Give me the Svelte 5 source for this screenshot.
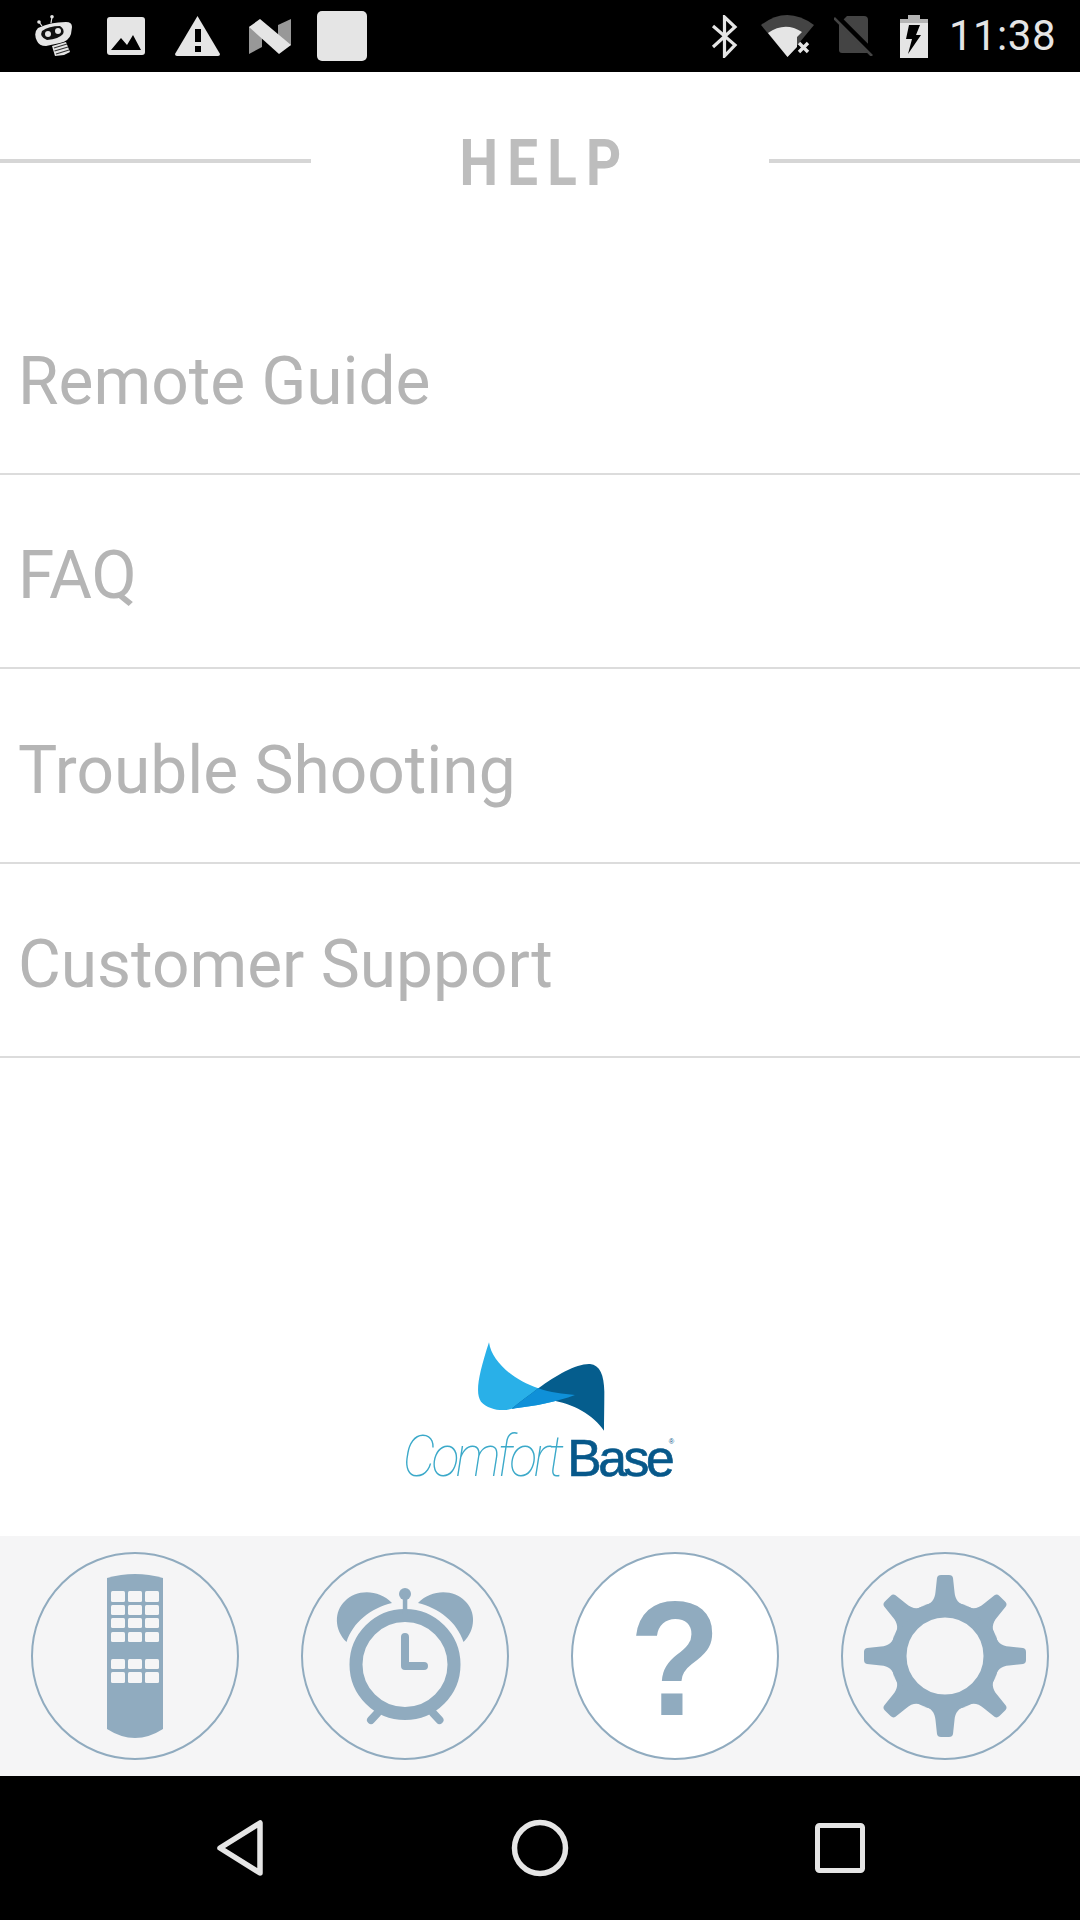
<script>
  const items = ['Remote Guide', 'FAQ', 'Trouble Shooting', 'Customer Support'];
  const teeth = [0, 45, 90, 135, 180, 225, 270, 315];
  const buttonCols = [80, 97, 114];
  const buttonRows = [
    [39, 11], [53, 10], [66, 10], [80, 10], [107, 10], [120, 11]
  ];
</script>

<div class="screen">
  <header class="status">
    <div class="status-left">
      <svg class="i-robot" viewBox="0 0 40 42">
        <path d="M5 7L8 11M18 2L17 8" stroke="#e5e5e5" stroke-width="1.2" />
        <circle cx="5" cy="7" r="1.8" fill="#e5e5e5" />
        <circle cx="18" cy="1.8" r="1.8" fill="#e5e5e5" />
        <path d="M4 13Q16 7 32 7Q38 7 38 12L37 19Q35 26 26 28L12 31Q5 31 3 26Q-1 18 4 13Z" fill="#e5e5e5" />
        <path d="M8 16Q15 11 26 11Q31 14 29 19Q25 24 13 25Q5 22 8 16Z" fill="#111" />
        <circle cx="14" cy="19" r="3" fill="#e5e5e5" />
        <circle cx="24" cy="16" r="3" fill="#e5e5e5" />
        <path d="M18 31L32 27L36 37L30 40L21 41Z" fill="#e5e5e5" />
        <path d="M20 33L33 29M20.5 36L34 32M22 39L35 35" stroke="#333" stroke-width="1.3" />
      </svg>
      <svg class="i-image" viewBox="0 0 38 38">
        <rect width="38" height="38" rx="3" fill="#e5e5e5" />
        <path d="M4 33L14 21L20 28L26 18L34 33Z" fill="#000" />
      </svg>
      <svg class="i-warn" viewBox="0 0 45 40">
        <path d="M22.5 0L45 38Q45 40 43 40H2Q0 40 0 38Z" fill="#e5e5e5" />
        <rect x="20" y="13" width="6" height="13" fill="#000" />
        <rect x="20" y="30" width="6" height="6" fill="#000" />
      </svg>
      <svg class="i-n" viewBox="0 0 42 35">
        <path d="M0 8L13 2V28L0 35Z" fill="#989898" />
        <path d="M42 0L29 6V32L42 26Z" fill="#989898" />
        <path d="M0 8L11 0L42 26L30 35Z" fill="#e5e5e5" />
      </svg>
      <div class="app-square"></div>
    </div>
    <div class="status-right">
      <svg class="i-bt" viewBox="0 0 27 43">
        <path d="M2 11L24 30L13.5 41V2L24 12L2 32" fill="none" stroke="#e5e5e5" stroke-width="3.2" />
      </svg>
      <svg class="i-wifi" viewBox="0 0 53 42">
        <path d="M0 10Q26 -10 53 10L26.5 42Z" fill="#444" />
        <path d="M7 18Q24 6 41 17L36 22V32L26.5 42Z" fill="#e5e5e5" />
        <path d="M38 28L47 37M47 28L38 37" stroke="#e5e5e5" stroke-width="3.4" />
      </svg>
      <svg class="i-sim" viewBox="0 0 40 40">
        <path d="M13 0H30Q34 0 34 4V37H8Q5 37 5 34V8Z" fill="#444" />
        <path d="M2 0L40 38" stroke="#000" stroke-width="6" />
        <path d="M0 2L38 40" stroke="#444" stroke-width="2.6" />
      </svg>
      <svg class="i-battery" viewBox="0 0 28 43">
        <path d="M8 0H20V4H28V9H0V4H8Z" fill="#b4b4b4" />
        <rect y="8" width="28" height="35" fill="#e5e5e5" />
        <path d="M9 10H20L16 20H21L8 39L12 24H6Z" fill="#000" />
      </svg>
      <span class="time">11:38</span>
    </div>
  </header>

  <div class="title">
    <span class="rule"></span>
    <h1>HELP</h1>
    <span class="rule"></span>
  </div>

  <ul class="menu">
    {#each items as item}
      <li>{item}</li>
    {/each}
  </ul>

  <div class="logo">
    <svg viewBox="0 0 960 510" width="320" height="170">
      <path d="M327 67C335 125 400 180 475 205C510 218 550 222 585 225C530 245 470 258 395 266C370 275 325 270 303 245C285 220 295 165 327 67Z" fill="#29b0e8" />
      <path d="M475 205C530 165 590 130 630 132C660 135 672 165 673 215C673 260 672 300 672 332C640 285 580 250 510 240C470 250 430 258 395 266C420 245 450 225 475 205Z" fill="#055d8d" />
      <path d="M475 205C510 218 550 222 585 225C530 245 470 258 395 266C420 245 450 225 475 205Z" fill="#0f90d8" />
      <text class="comfort" transform="translate(68 468) scale(1 1.12)" textLength="484" lengthAdjust="spacing">Comfort</text>
      <text class="base" x="562" y="468" textLength="322" lengthAdjust="spacing">Base</text>
      <text class="reg" x="866" y="372">®</text>
    </svg>
  </div>

  <nav class="tabs">
    <button aria-label="Remote">
      <svg viewBox="0 0 208 208">
        <path d="M76 26Q104 18 132 26V177Q104 195 76 177Z" fill="#90abbf" />
        {#each buttonRows as row}
          {#each buttonCols as col}
            <rect x={col} y={row[0]} width="14" height={row[1]} rx="1.5" fill="#f5f5f6" />
          {/each}
        {/each}
      </svg>
    </button>
    <button aria-label="Alarm">
      <svg viewBox="0 0 208 208">
        <circle cx="104" cy="112.5" r="49" fill="none" stroke="#90abbf" stroke-width="13" />
        <path d="M45.5 90C33 78 33 59 44 49C55 37 78 37 91 51C70 56 52 70 45.5 90Z" fill="#90abbf" />
        <path d="M45.5 90C33 78 33 59 44 49C55 37 78 37 91 51C70 56 52 70 45.5 90Z" fill="#90abbf" transform="matrix(-1 0 0 1 208 0)" />
        <circle cx="104" cy="42" r="6" fill="#90abbf" />
        <rect x="101.8" y="42" width="4.5" height="20" fill="#90abbf" />
        <path d="M104 85V114H123" fill="none" stroke="#90abbf" stroke-width="8" stroke-linecap="round" stroke-linejoin="round" />
        <path d="M76.5 161L70 168M132 161L138.5 168" stroke="#90abbf" stroke-width="8" stroke-linecap="round" />
      </svg>
    </button>
    <button class="active" aria-label="Help">
      <svg viewBox="0 0 208 208">
        <text class="qmark" transform="translate(104 163) scale(0.92 1)">?</text>
      </svg>
    </button>
    <button aria-label="Settings">
      <svg viewBox="0 0 208 208">
        <g transform="translate(104 104)">
          <circle r="46.5" fill="none" stroke="#90abbf" stroke-width="16" />
          {#each teeth as angle}
            <path transform="rotate({angle})" d="M-21 -51C-14 -51 -10 -57 -9.5 -64L-8 -78Q-7.5 -81 -4 -81L4 -81Q7.5 -81 8 -78L9.5 -64C10 -57 14 -51 21 -51Z" fill="#90abbf" />
          {/each}
        </g>
      </svg>
    </button>
  </nav>

  <footer class="navbar">
    <svg class="nav-back" viewBox="0 0 48 58">
      <path d="M44 4V54L4 29Z" fill="none" stroke="#e5e5e5" stroke-width="5.5" stroke-linejoin="round" />
    </svg>
    <svg class="nav-home" viewBox="0 0 58 58">
      <circle cx="29" cy="29" r="25.5" fill="none" stroke="#e5e5e5" stroke-width="5.5" />
    </svg>
    <svg class="nav-recent" viewBox="0 0 50 50">
      <rect x="2.5" y="2.5" width="45" height="45" rx="2" fill="none" stroke="#e5e5e5" stroke-width="5" />
    </svg>
  </footer>
</div>

<style>
  :global(body) {
    margin: 0;
    background: #fff;
  }

  .screen {
    width: 1080px;
    height: 1920px;
    display: flex;
    flex-direction: column;
    font-family: Roboto, sans-serif;
    overflow: hidden;
  }

  .status {
    height: 72px;
    background: #000;
    display: flex;
    justify-content: space-between;
    align-items: center;
    flex-shrink: 0;
  }

  .status-left,
  .status-right {
    display: flex;
    align-items: center;
  }

  .status-left { padding-left: 34px; }
  .status-right { padding-right: 24px; }

  .status svg { display: block; }

  .i-robot { width: 40px; height: 42px; margin-right: 33px; }
  .i-image { width: 38px; height: 38px; margin-right: 30px; }
  .i-warn { width: 45px; height: 40px; margin-right: 29px; }
  .i-n { width: 42px; height: 35px; margin-right: 26px; }

  .app-square {
    width: 50px;
    height: 50px;
    background: #e5e5e5;
    border-radius: 5px;
  }

  .i-bt { width: 27px; height: 43px; margin-right: 23px; }
  .i-wifi { width: 53px; height: 42px; margin-right: 20px; }
  .i-sim { width: 40px; height: 40px; margin-right: 26px; }
  .i-battery { width: 28px; height: 43px; margin-right: 21px; }

  .time {
    font-size: 42px;
    color: #e5e5e5;
    letter-spacing: 0.5px;
    line-height: 1;
  }

  .title {
    height: 178px;
    margin-bottom: 30px;
    display: flex;
    align-items: center;
    justify-content: space-between;
    flex-shrink: 0;
  }

  .rule {
    width: 311px;
    height: 4px;
    background: #d6d6d6;
  }

  h1 {
    margin: 0;
    font-family: Roboto, sans-serif;
    font-size: 65px;
    font-weight: 700;
    letter-spacing: 11px;
    padding: 4px 0 0 11px;
    color: #bdbdbd;
    line-height: 1;
    transform: scaleX(0.84);
  }

  .menu {
    list-style: none;
    margin: 0;
    padding: 0;
  }

  .menu li {
    height: 182.5px;
    border-bottom: 2px solid #dcdcdc;
    padding: 10px 0 0 18px;
    display: flex;
    align-items: center;
    font-size: 65.8px;
    color: #b5b5b5;
  }

  .logo {
    flex: 1;
    display: flex;
    justify-content: center;
    align-items: flex-end;
    padding-bottom: 46px;
  }

  .comfort {
    font-family: Roboto, sans-serif;
    font-weight: 100;
    font-style: italic;
    font-size: 155px;
    fill: #3ba9c9;
  }

  .base {
    font-family: "Liberation Sans", sans-serif;
    font-size: 155px;
    fill: #07588a;
    stroke: #07588a;
    stroke-width: 2px;
  }

  .reg {
    font-family: "Liberation Sans", sans-serif;
    font-size: 22px;
    fill: #07588a;
  }

  .tabs {
    height: 240px;
    background: #f5f5f6;
    display: grid;
    grid-template-columns: repeat(4, 270px);
    flex-shrink: 0;
  }

  .tabs button {
    width: 208px;
    height: 208px;
    align-self: center;
    justify-self: center;
    padding: 0;
    box-sizing: border-box;
    border: 2.5px solid #90abbf;
    border-radius: 50%;
    background: transparent;
  }

  .tabs button.active { background: #fff; }

  .tabs svg {
    display: block;
    width: 208px;
    height: 208px;
    margin: -2.5px;
  }

  .qmark {
    font-family: "Liberation Sans", sans-serif;
    font-weight: 700;
    font-size: 163px;
    fill: #90abbf;
    text-anchor: middle;
  }

  .navbar {
    height: 144px;
    background: #000;
    flex-shrink: 0;
    display: grid;
    grid-template-columns: 264px 1fr 264px;
    align-items: center;
  }

  .nav-back { width: 48px; height: 58px; justify-self: end; }
  .nav-home { width: 58px; height: 58px; justify-self: center; }
  .nav-recent { width: 50px; height: 50px; justify-self: start; margin-left: -1px; }
</style>
